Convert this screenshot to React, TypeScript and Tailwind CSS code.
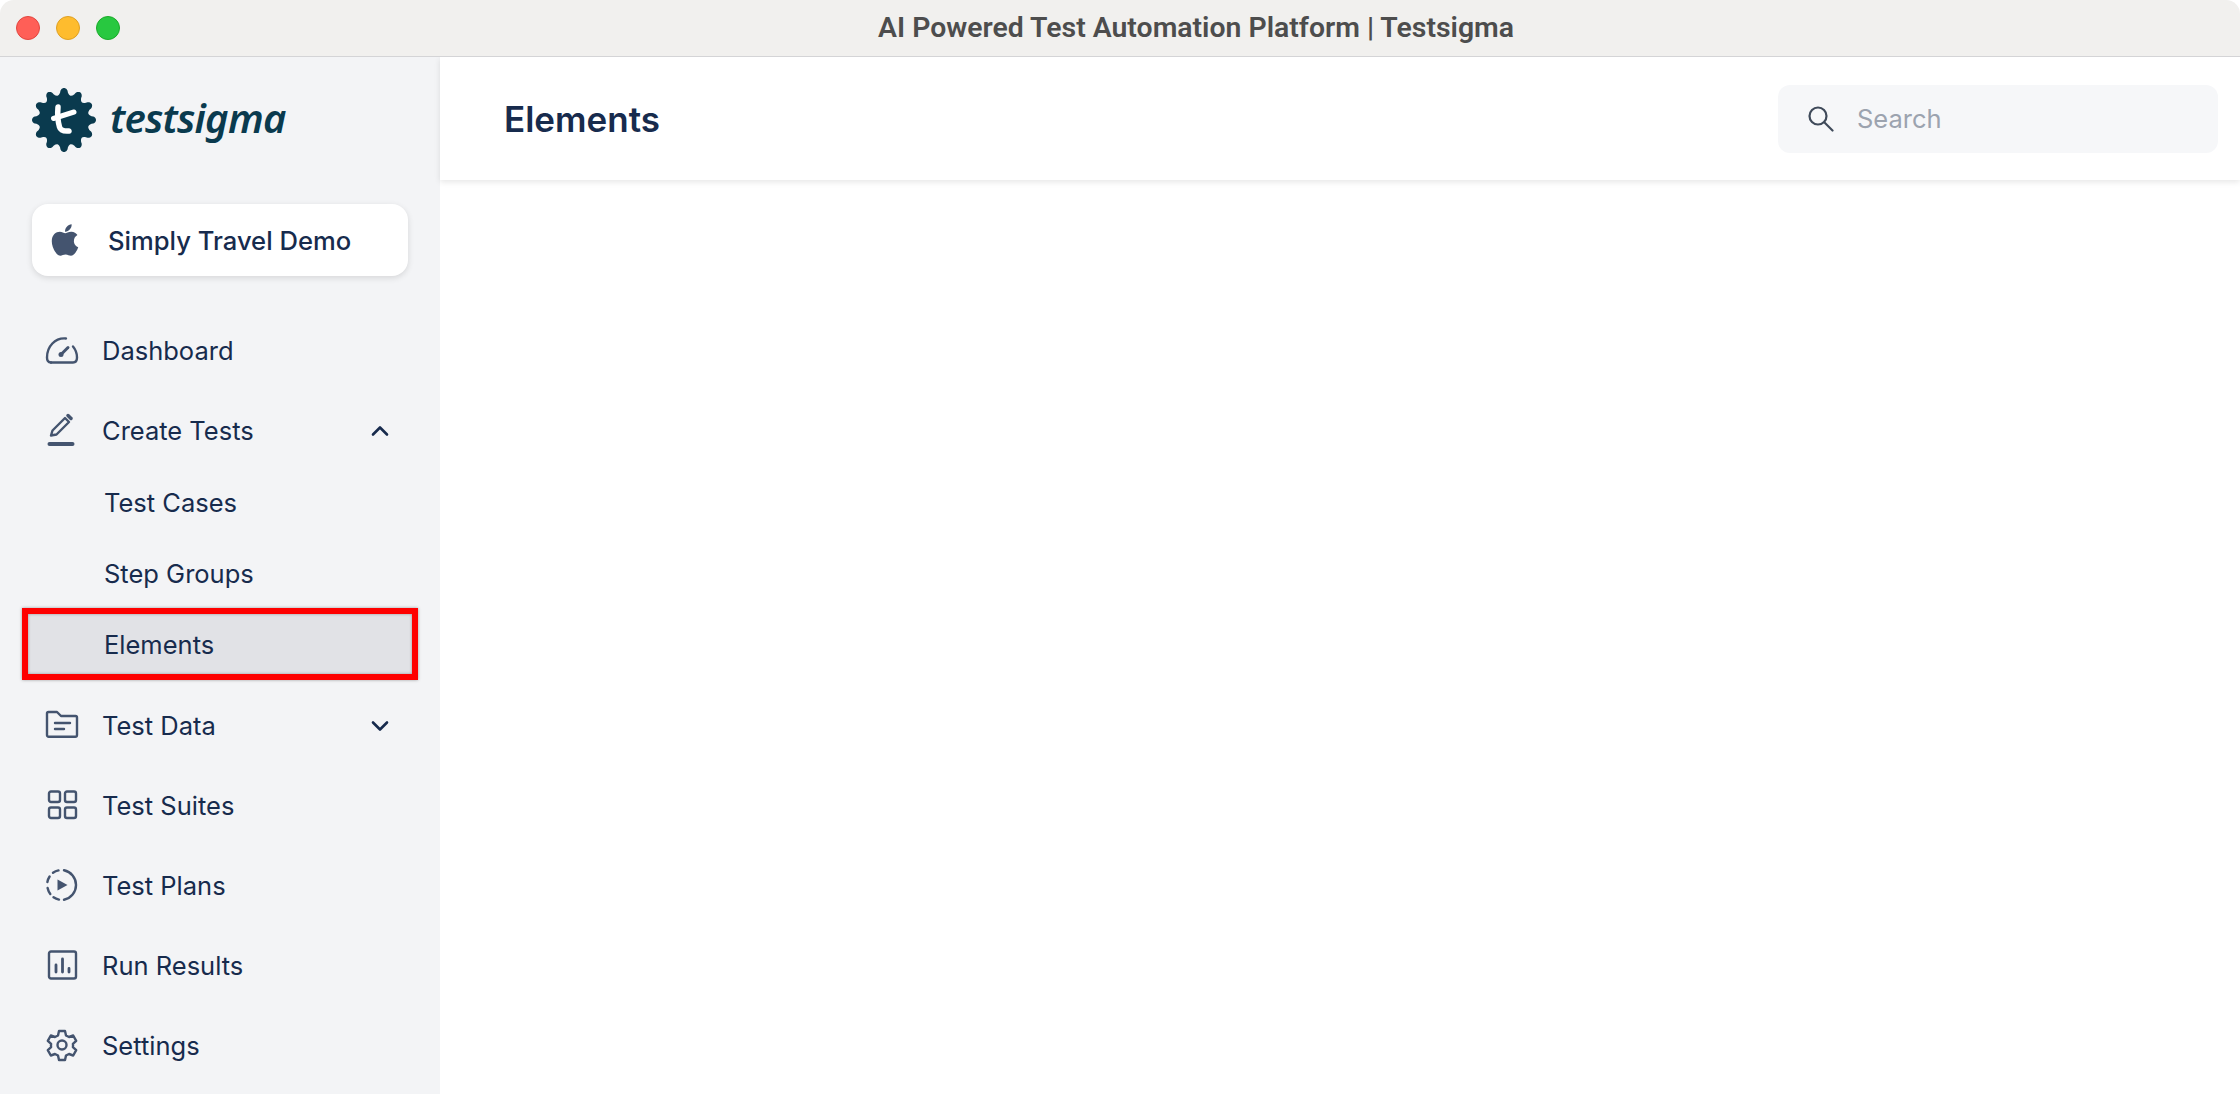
import React from "react";
import { FaApple } from "react-icons/fa";

const ic = { fill: "none", stroke: "#44546f", strokeWidth: 2.4, strokeLinecap: "round" as const, strokeLinejoin: "round" as const };

function Svg({ children }: { children: React.ReactNode }) {
  return (
    <svg width="36" height="36" viewBox="0 0 36 36" className="shrink-0" {...ic}>
      {children}
    </svg>
  );
}

const Gauge = () => (
  <Svg>
    <path d="M7 30.500h22c3 0 4-2 4-5c0-4-1.500-8-4-11" />
    <path d="M7 30.500c-3 0-4-2-4-5c0-11 8-20 19-19" />
    <path d="M24 15.500l-6 6" strokeWidth="3" />
    <circle cx="17" cy="22.500" r="2.500" fill="#44546f" stroke="none" />
  </Svg>
);
const Pencil = () => (
  <Svg>
    <path d="M7 23.500l1.500-5L21 6l4 4-12.500 12.500z" />
    <path d="M24 3.500l3 3" strokeWidth="3.500" />
    <path d="M5.500 32h23" strokeWidth="4" />
  </Svg>
);
const Folder = () => (
  <Svg>
    <path d="M3 10V6.500C3 5.500 3.800 5 4.500 5H13l4 4h14.500C32.500 9 33 9.800 33 10.500V28c0 1-.7 1.800-1.700 1.800H4.700C3.700 29.800 3 29 3 28z" />
    <path d="M11 16h15M11 22h9" />
  </Svg>
);
const Grid = () => (
  <Svg>
    <rect x="5" y="4.500" width="11" height="10.500" rx="2" />
    <rect x="21" y="4.500" width="11" height="10.500" rx="2" />
    <rect x="5" y="20.500" width="11" height="10.500" rx="2" />
    <rect x="21" y="20.500" width="11" height="10.500" rx="2" />
  </Svg>
);
const PlayDash = () => (
  <Svg>
    <path d="M14.500 3.400a15 15 0 0 0-5.500 2.400" />
    <path d="M20 3.300a15 15 0 0 1 0 29.400" />
    <path d="M15 32.600a15 15 0 0 1-5.500-2.400" />
    <path d="M6.300 27a15 15 0 0 1-2.700-6" />
    <path d="M3.400 15a15 15 0 0 1 2.200-5.500" />
    <path d="M13.500 12.500v11l10-5.500z" fill="#44546f" stroke="none" />
  </Svg>
);
const Chart = () => (
  <Svg>
    <rect x="5" y="4.500" width="27" height="27" rx="2" />
    <path d="M12 18v7M18.500 12v13M25 21.500v3.500" strokeWidth="2.800" />
  </Svg>
);
const Gear = () => (
  <Svg>
    <path d="M15 4h6l1 4.500 3 1.500 4.200-1.500 3 5.300-3.300 3a10 10 0 0 1 0 3.400l3.300 3-3 5.300-4.200-1.500-3 1.500-1 4.500h-6l-1-4.500-3-1.500-4.200 1.500-3-5.300 3.300-3a10 10 0 0 1 0-3.400l-3.300-3 3-5.300 4.200 1.500 3-1.500z" />
    <circle cx="18" cy="18" r="4.500" />
  </Svg>
);

const Chevron = ({ up }: { up?: boolean }) => (
  <svg width="18" height="12" viewBox="0 0 18 12" fill="none" stroke="#172b4d" strokeWidth="2.600" strokeLinecap="round" strokeLinejoin="round" className="translate-y-[1px]">
    <path d={up ? "M2 9.500l7-7 7 7" : "M2 2.500l7 7 7-7"} />
  </svg>
);

const gearPath = (() => {
  const pts: string[] = [];
  for (let i = 0; i < 360; i += 1) {
    const a = (i * Math.PI) / 180;
    const c = Math.cos(12 * a);
    const w = Math.sign(c) * Math.pow(Math.abs(c), 0.65);
    const r = 28.6 + 3.4 * w;
    pts.push(`${(32 + r * Math.sin(a)).toFixed(2)} ${(32 - r * Math.cos(a)).toFixed(2)}`);
  }
  return `M${pts.join("L")}Z`;
})();

const LogoMark = () => (
  <svg width="64" height="64" viewBox="0 0 64 64" className="shrink-0">
    <path d={gearPath} fill="#0a3a4e" />
    <path d="M26 19c-.5 6 0 15 1.500 20c1 3.500 4 4.500 9.500 4" fill="none" stroke="#fff" strokeWidth="5.500" strokeLinecap="round" />
    <path d="M21.500 30.500L42 24" fill="none" stroke="#fff" strokeWidth="5" strokeLinecap="round" />
  </svg>
);

function NavItem({ icon, label, chevron }: { icon: React.ReactNode; label: string; chevron?: "up" | "down" }) {
  return (
    <div className="flex h-[80px] items-center pl-[44px] pr-[51px]">
      <div className="flex w-[58px]">{icon}</div>
      <span className="flex-1 translate-y-[1px] text-[25.5px] leading-[32px] text-[#172b4d]">{label}</span>
      {chevron && <Chevron up={chevron === "up"} />}
    </div>
  );
}

function SubItem({ label }: { label: string }) {
  return (
    <div className="flex h-[71px] items-center pl-[104px] text-[25.5px] leading-[32px] text-[#172b4d]">
      <span className="translate-y-[1px]">{label}</span>
    </div>
  );
}

export default function App() {
  return (
    <div className="flex h-[1094px] w-[2240px] flex-col overflow-hidden bg-white font-['Inter',sans-serif]">
      <div className="relative flex h-[57px] shrink-0 items-center justify-center rounded-t-[14px] border-b border-[#d4d4d6] bg-[#f1f0ee] pl-[152px]">
        <div className="absolute left-[16px] top-[16px] flex gap-[16px]">
          <span className="h-[24px] w-[24px] rounded-full border border-[#e2463f] bg-[#ff5f57]" />
          <span className="h-[24px] w-[24px] rounded-full border border-[#dfa023] bg-[#febc2e]" />
          <span className="h-[24px] w-[24px] rounded-full border border-[#1aab29] bg-[#28c840]" />
        </div>
        <span className="font-['Roboto',sans-serif] text-[28.4px] font-semibold leading-[32px] text-[#4d4d4d]">
          AI Powered Test Automation Platform | Testsigma
        </span>
      </div>

      <div className="flex min-h-0 flex-1">
        <aside className="flex w-[440px] shrink-0 flex-col bg-[#f3f4f6]">
          <div className="flex h-[147px] shrink-0 items-start gap-[14px] pl-[32px] pt-[31px]">
            <LogoMark />
            <span className="mt-[5px] font-['Noto_Sans',sans-serif] text-[40px] font-semibold italic leading-[50px] tracking-[-0.8px] text-[#0a3a4e]">
              testsigma
            </span>
          </div>

          <div className="mx-[32px] flex h-[72px] shrink-0 items-center rounded-[16px] bg-white pl-[15px] shadow-[0_2px_6px_rgba(0,0,0,0.12)]">
            <FaApple className="h-[36px] w-[36px] shrink-0 text-[#44546f]" />
            <span className="ml-[25px] translate-y-[1px] text-[25.6px] font-medium leading-[32px] text-[#172b4d]">Simply Travel Demo</span>
          </div>

          <nav className="mt-[34px] flex flex-col">
            <NavItem icon={<Gauge />} label="Dashboard" />
            <NavItem icon={<Pencil />} label="Create Tests" chevron="up" />
            <div className="-mt-[4px] flex flex-col">
              <SubItem label="Test Cases" />
              <SubItem label="Step Groups" />
              <div className="mx-[22px] flex h-[72px] items-center border-[6px] border-[#fe0000] bg-[#e1e2e6] pl-[76px] text-[25.5px] leading-[32px] text-[#172b4d] shadow-[0_0_3px_rgba(0,0,0,0.35),inset_0_0_3px_rgba(0,0,0,0.35)]">
                <span className="translate-y-[1px]">Elements</span>
              </div>
            </div>
            <div className="mt-[5px] flex flex-col">
              <NavItem icon={<Folder />} label="Test Data" chevron="down" />
              <NavItem icon={<Grid />} label="Test Suites" />
              <NavItem icon={<PlayDash />} label="Test Plans" />
              <NavItem icon={<Chart />} label="Run Results" />
              <NavItem icon={<Gear />} label="Settings" />
            </div>
          </nav>
        </aside>

        <main className="flex min-w-0 flex-1 flex-col">
          <header className="flex h-[123px] shrink-0 items-center justify-between pl-[64px] pr-[22px] shadow-[0_2px_6px_rgba(0,0,0,0.1)]">
            <h1 className="text-[35px] font-semibold leading-[40px] text-[#172b4d]">Elements</h1>
            <div className="flex h-[68px] w-[440px] items-center rounded-[12px] bg-[#f6f7f9] pl-[30px]">
              <svg width="26" height="26" viewBox="0 0 26 26" fill="none" stroke="#3f4a5a" strokeWidth="2.200" strokeLinecap="round">
                <circle cx="10" cy="10" r="8.500" />
                <path d="M16.500 16.500l8 8" />
              </svg>
              <span className="ml-[23px] text-[25.5px] leading-[32px] text-[#9ca3af]">Search</span>
            </div>
          </header>
        </main>
      </div>
    </div>
  );
}
